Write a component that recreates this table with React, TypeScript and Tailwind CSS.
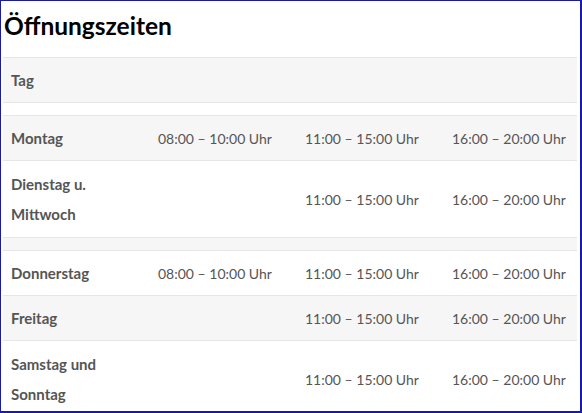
import React from "react";

const F = { fontFamily: "Lato, 'Noto Sans', sans-serif" };

type Row = { day: string[]; t1?: string; t2?: string; t3?: string; grey: boolean; h: string };

const rows: Row[] = [
  { day: ["Montag"], t1: "08:00 – 10:00 Uhr", t2: "11:00 – 15:00 Uhr", t3: "16:00 – 20:00 Uhr", grey: true, h: "h-[45px]" },
  { day: ["Dienstag u.", "Mittwoch"], t2: "11:00 – 15:00 Uhr", t3: "16:00 – 20:00 Uhr", grey: false, h: "h-[77px]" },
  { day: [], grey: true, h: "h-[13px]" },
  { day: ["Donnerstag"], t1: "08:00 – 10:00 Uhr", t2: "11:00 – 15:00 Uhr", t3: "16:00 – 20:00 Uhr", grey: false, h: "h-[45px]" },
  { day: ["Freitag"], t2: "11:00 – 15:00 Uhr", t3: "16:00 – 20:00 Uhr", grey: true, h: "h-[45px]" },
  { day: ["Samstag und", "Sonntag"], t2: "11:00 – 15:00 Uhr", t3: "16:00 – 20:00 Uhr", grey: false, h: "h-[77px]" },
];

function TableRow({ r }: { r: Row }) {
  return (
    <div
      className={`grid grid-cols-[147px_147px_147px_133px] items-center border-b border-[#e6e6e6] ${r.h} ${
        r.grey ? "bg-[#f6f6f6]" : "bg-white"
      }`}
    >
      <div className="pl-2 font-bold text-[15px] text-[#555]">
        {r.day.map((d) => (
          <div key={d} className="leading-[30px]">
            {d}
          </div>
        ))}
      </div>
      <div className="pl-2 pt-[1px] text-[14px] text-[#555] leading-[30px]">{r.t1}</div>
      <div className="pl-2 pt-[1px] text-[14px] text-[#555] leading-[30px]">{r.t2}</div>
      <div className="pl-2 pt-[1px] text-[14px] text-[#555] leading-[30px]">{r.t3}</div>
    </div>
  );
}

export default function App() {
  return (
    <div
      style={F}
      className="w-[582px] h-[413px] overflow-hidden bg-white border-l border-t border-r-2 border-b-2 border-[#1a1aa8] pl-[2px] pr-[3px]"
    >
      <div className="h-[56px] pt-[10px]">
        <h1 className="text-[24.5px] leading-[30px] font-bold text-black pl-[1px]">Öffnungszeiten</h1>
      </div>
      <div className="border-t border-[#e6e6e6]">
        <div className="h-[45px] bg-[#f6f6f6] border-b border-[#e6e6e6] flex items-center pl-2 font-bold text-[15px] text-[#555]">
          Tag
        </div>
        <div className="h-[13px] bg-white border-b border-[#e6e6e6]" />
        {rows.map((r, i) => (
          <TableRow key={i} r={r} />
        ))}
      </div>
    </div>
  );
}
